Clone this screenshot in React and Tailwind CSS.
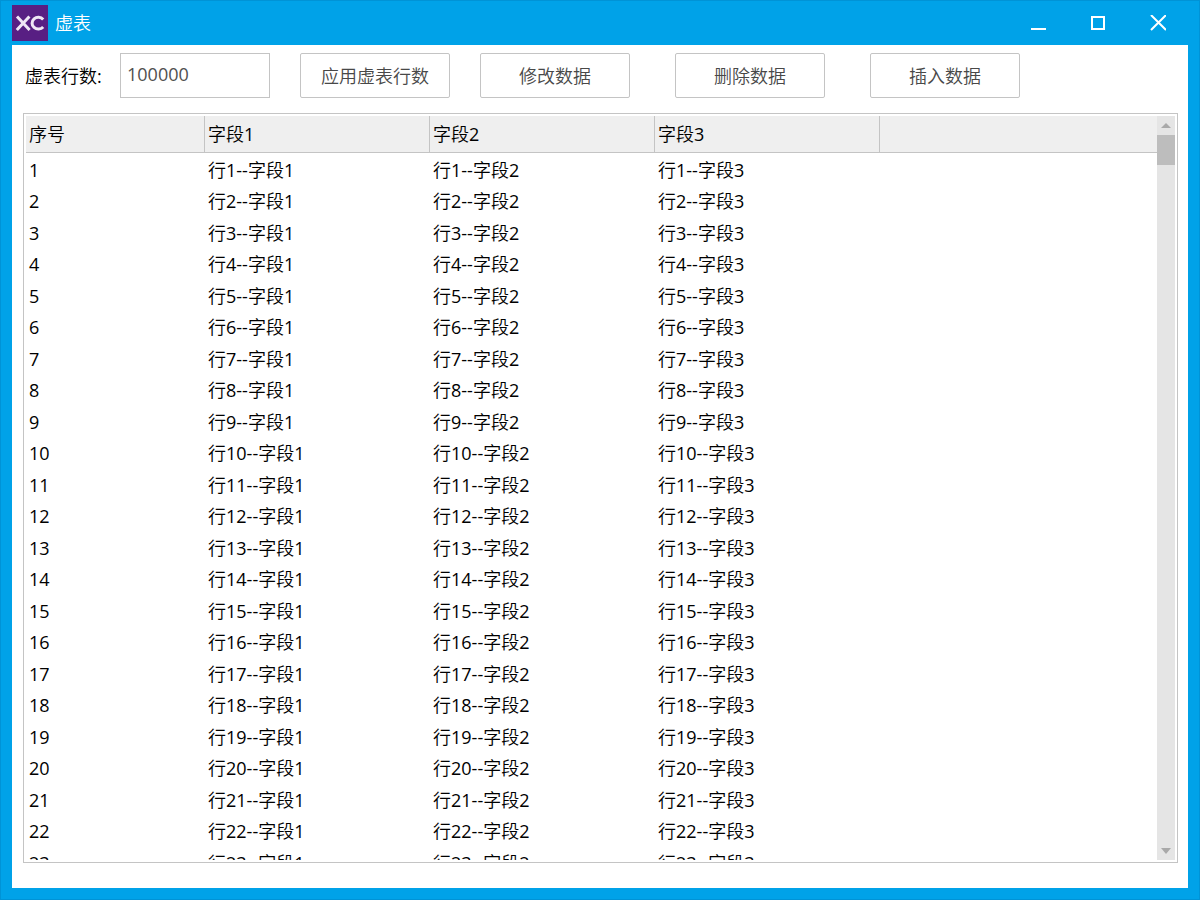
import { useState } from "react";

const FIELDS = ["字段1", "字段2", "字段3"];
const VISIBLE_ROWS = 23;

const buttonClass =
  "h-[45px] w-[150px] rounded-[2px] border border-[#c4c4c4] bg-white text-[#484848] hover:bg-gray-50";

function Logo() {
  return (
    <svg viewBox="0 0 36 36" className="size-9 shrink-0" aria-hidden="true">
      <rect width="36" height="36" fill="#581f83" />
      <g fill="none" stroke="#efe6f5" strokeWidth="3" strokeLinecap="butt">
        <path d="M5 11.5 17.6 25M17.4 11.5 4.8 25" />
        <path d="M31.2 14.4A6.3 5.9 0 1 0 31.2 22" />
      </g>
    </svg>
  );
}

function TitleBar() {
  return (
    <header className="flex h-11 shrink-0 items-center pb-px text-white">
      <Logo />
      <h1 className="pl-[7px]">虚表</h1>
      <div className="ml-auto flex h-full">
        <button type="button" aria-label="最小化" className="flex w-[60px] items-center justify-center">
          <svg width="16" height="16" viewBox="0 0 16 16" aria-hidden="true">
            <path d="M1 14h15" stroke="#fff" strokeWidth="2" />
          </svg>
        </button>
        <button type="button" aria-label="最大化" className="flex w-[60px] items-center justify-center">
          <svg width="16" height="16" viewBox="0 0 16 16" aria-hidden="true">
            <path d="M2 2h12v12H2z" fill="none" stroke="#fff" strokeWidth="2" />
          </svg>
        </button>
        <button type="button" aria-label="关闭" className="flex w-[60px] items-center justify-center">
          <svg width="16" height="16" viewBox="0 0 16 16" aria-hidden="true">
            <path d="M1 0 16 15M16 0 1 15" stroke="#fff" strokeWidth="2" />
          </svg>
        </button>
      </div>
    </header>
  );
}

function ScrollBar({ onUp, onDown }) {
  return (
    <div className="flex w-[18px] shrink-0 flex-col bg-[#e5e5e5]">
      <button type="button" aria-label="向上滚动" onClick={onUp} className="flex h-[19px] items-center justify-center">
        <svg width="10" height="6" viewBox="0 0 10 6" aria-hidden="true">
          <path d="M5 0 10 5H0z" fill="#a9a9a9" />
        </svg>
      </button>
      <div className="h-[30px] bg-[#bdbdbd]" />
      <div className="flex-1" />
      <button type="button" aria-label="向下滚动" onClick={onDown} className="flex h-[19px] items-center justify-center">
        <svg width="10" height="6" viewBox="0 0 10 6" aria-hidden="true">
          <path d="M0 0h10L5 6z" fill="#a9a9a9" />
        </svg>
      </button>
    </div>
  );
}

function VirtualTable({ total }) {
  const [first, setFirst] = useState(1);
  const count = Math.min(VISIBLE_ROWS, Math.max(0, total - first + 1));
  const rows = Array.from({ length: count }, (_, i) => first + i);

  return (
    <div className="mt-[15px] mr-2.5 mb-[25px] ml-[11px] flex min-h-0 flex-1 border border-[#c4c4c4] p-0.5">
      <div className="min-w-0 flex-1 overflow-hidden">
        <table className="w-full table-fixed border-separate border-spacing-0 text-left">
          <colgroup>
            <col className="w-[179px]" />
            <col className="w-[225px]" />
            <col className="w-[225px]" />
            <col className="w-[225px]" />
            <col />
          </colgroup>
          <thead>
            <tr className="h-[37px] bg-[#efefef]">
              <th scope="col" className="border-r border-b border-[#c4c4c4] py-0 pl-[3px] font-normal">序号</th>
              {FIELDS.map((field) => (
                <th key={field} scope="col" className="border-r border-b border-[#c4c4c4] py-0 pl-[3px] font-normal">
                  {field}
                </th>
              ))}
              <td className="border-b border-[#c4c4c4] p-0" />
            </tr>
          </thead>
          <tbody>
            {rows.map((n) => (
              <tr key={n} className="h-8 odd:h-[31px]">
                <td className="pt-0.5 pb-0 pl-[3px]">{n}</td>
                {FIELDS.map((field) => (
                  <td key={field} className="pt-0.5 pb-0 pl-[3px]">{`行${n}--${field}`}</td>
                ))}
                <td className="p-0" />
              </tr>
            ))}
          </tbody>
        </table>
      </div>
      <ScrollBar
        onUp={() => setFirst((v) => Math.max(1, v - 1))}
        onDown={() => setFirst((v) => Math.min(Math.max(1, total), v + 1))}
      />
    </div>
  );
}

export default function App() {
  const [draft, setDraft] = useState("100000");
  const [total, setTotal] = useState(100000);

  return (
    <div className="flex h-screen flex-col border border-[#0093d6] bg-[#00a2e8] px-[11px] pb-[11px] font-['Open_Sans','Noto_Sans_CJK_SC_DemiLight','Noto_Sans_CJK_SC',sans-serif] text-[18px] leading-6 text-black">
      <TitleBar />
      <main className="flex min-h-0 flex-1 flex-col bg-white">
        <div className="flex shrink-0 items-center pt-2 pl-[13px]">
          <label htmlFor="row-count" className="w-[95px] whitespace-nowrap">虚表行数:</label>
          <input
            id="row-count"
            value={draft}
            onChange={(e) => setDraft(e.target.value)}
            className="h-[45px] w-[150px] border border-[#c4c4c4] bg-white px-1.5 pb-1 text-[#505050] outline-none"
          />
          <div className="ml-[30px] flex gap-[45px]">
            <div className="flex gap-[30px]">
              <button type="button" className={buttonClass} onClick={() => setTotal(Number(draft) || 0)}>
                应用虚表行数
              </button>
              <button type="button" className={buttonClass}>修改数据</button>
            </div>
            <button type="button" className={buttonClass}>删除数据</button>
            <button type="button" className={buttonClass}>插入数据</button>
          </div>
        </div>
        <VirtualTable total={total} />
      </main>
    </div>
  );
}
